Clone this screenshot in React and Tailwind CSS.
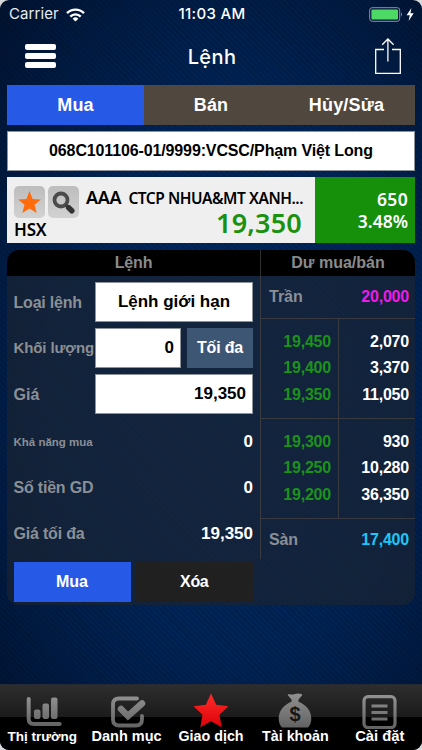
import React, { useState } from 'react';

const tabs = ['Mua', 'Bán', 'Hủy/Sửa'];

const sellOrders = [
  ['19,450', '2,070'],
  ['19,400', '3,370'],
  ['19,350', '11,050'],
];

const buyOrders = [
  ['19,300', '930'],
  ['19,250', '10,280'],
  ['19,200', '36,350'],
];

const STRIPES =
  'bg-[repeating-linear-gradient(45deg,rgba(0,0,0,0.12)_0px,rgba(0,0,0,0.12)_2px,transparent_2px,transparent_4px)]';

const StatusBar = () => (
  <div className="h-[29px] flex items-center px-[9px] font-['Inter',sans-serif] text-[15px] text-white">
    <div className="flex-1 flex items-center gap-[7px]">
      <span className="font-normal tracking-[0.1px] text-[#e8ebf0]">Carrier</span>
      <svg width="19" height="14" viewBox="0 0 19 14" fill="none" stroke="#fff" strokeWidth="2.4">
        <path d="M1 5.2a12 12 0 0 1 17 0" />
        <path d="M4.3 8.6a7.3 7.3 0 0 1 10.4 0" />
        <path d="M9.5 13.6 6.6 10.7a4.1 4.1 0 0 1 5.8 0z" fill="#fff" stroke="none" />
      </svg>
    </div>
    <span className="font-medium tracking-[0.35px] pl-[2px]">11:03 AM</span>
    <div className="flex-1 flex items-center justify-end">
      <svg width="47" height="15" viewBox="0 0 47 15" className="-mr-[3px]">
        <rect x="0.7" y="0.7" width="30" height="13.6" rx="2.5" fill="none" stroke="#8a93a3" />
        <rect x="2.4" y="2.4" width="26.6" height="10.2" rx="1" fill="#4cd964" />
        <path d="M32 5.3q2 2.2 0 4.4z" fill="#8a93a3" />
        <path d="M42.4 1 37.6 8.3h3.2L39.6 14l5.1-7.7h-3.2z" fill="#fff" />
      </svg>
    </div>
  </div>
);

const Header = () => (
  <div className="h-[56px] flex items-center justify-between pl-[25px] pr-[20px]">
    <div className="w-[31px] flex flex-col gap-[3px] mt-[-3px]">
      <div className="h-[6px] bg-white rounded-[2px]"></div>
      <div className="h-[6px] bg-white rounded-[2px]"></div>
      <div className="h-[6px] bg-white rounded-[2px]"></div>
    </div>
    <h1 className="font-['Inter',sans-serif] font-medium text-[20px] text-white tracking-[0.4px] pr-[6px]">Lệnh</h1>
    <svg width="28" height="38" viewBox="0 0 28 38" fill="none" stroke="#fff" strokeWidth="1.3" className="-mt-[4px]">
      <path d="M10 13.5H1.7v24h24.6v-24H18" />
      <path d="M13.9 25.5V3M8.2 8.8 13.9 3l5.7 5.8" />
    </svg>
  </div>
);

const Quote = () => (
  <div className="h-[66px] mt-[6px] flex font-['Noto_Sans',sans-serif] font-semibold">
    <div className="w-[308px] bg-[#efefef] pl-[7px] pt-[9px] pr-[13px]">
      <div className="flex">
        <div className="w-[31px] h-[32px] rounded-[5px] bg-linear-to-b from-[#bdbdbd] to-[#d2d2d2] flex items-center justify-center">
          <svg width="25" height="25" viewBox="0 0 24 24">
            <path d="m12 1 3 7.6 8 .5-6.2 5.1 2.1 7.9L12 17.700l-6.900 4.400 2.100-7.900L1 9.100l8-.500z" fill="#ff6c0e" />
          </svg>
        </div>
        <div className="ml-[3px] w-[31px] h-[32px] rounded-[5px] bg-linear-to-b from-[#bdbdbd] to-[#d2d2d2] flex items-center justify-center">
          <svg width="25" height="25" viewBox="0 0 25 25" fill="none">
            <circle cx="10" cy="10" r="6.5" stroke="#4b4b4b" strokeWidth="3.8" />
            <path d="m15 15 2.5 2.5" stroke="#3c3c3c" strokeWidth="3" />
            <path d="m17.6 17.6 3.2 3.2" stroke="#333" strokeWidth="5.5" strokeLinecap="round" />
          </svg>
        </div>
        <div className="ml-[7px] flex-1 h-[22px] flex items-baseline justify-between text-black whitespace-nowrap leading-[22px]">
          <span className="text-[18px] tracking-[-0.4px]">AAA</span>
          <span className="text-[15.5px] tracking-[-0.45px] -mr-[1px]">CTCP NHUA&amp;MT XANH...</span>
        </div>
      </div>
      <div className="flex justify-between items-start">
        <span className="text-[17px] leading-[20px] mt-[2px] tracking-[-0.2px] text-black">HSX</span>
        <span className="text-[27px] leading-[28px] -mt-[9px] tracking-[0.2px] text-[#1a920f]">19,350</span>
      </div>
    </div>
    <div className="flex-1 bg-[#168f0b] text-white text-[17.5px] text-right leading-[22px] pt-[11px] pr-[7px]">
      <div className="tracking-[0.3px]">650</div>
      <div>3.48%</div>
    </div>
  </div>
);

const Field = ({ children, className }) => (
  <div className={`h-[40px] bg-white border border-[#8e939b] text-black flex items-center ${className}`}>{children}</div>
);

const OrderForm = () => (
  <div className="w-[253px] pl-[6.5px] pr-[7px] pt-[6px] text-[#8b8f96] text-[16px]">
    <div className="flex items-center h-[40px]">
      <span className="w-[81.5px] whitespace-nowrap tracking-[-0.2px] pt-[1px]">Loại lệnh</span>
      <Field className="w-[158px] justify-center text-[17px]">Lệnh giới hạn</Field>
    </div>
    <div className="flex items-center h-[40px] mt-[6px]">
      <span className="w-[81.5px] whitespace-nowrap text-[15px] tracking-[-0.1px] pt-[1px]">Khối lượng</span>
      <Field className="w-[86px] justify-end pr-[6px] text-[17px]">0</Field>
      <button className="ml-[6px] w-[66px] h-[40px] bg-[#3d5673] text-white tracking-[-0.2px]">Tối đa</button>
    </div>
    <div className="flex items-center h-[40px] mt-[6px]">
      <span className="w-[81.5px] pt-[1px]">Giá</span>
      <Field className="w-[158px] justify-end pr-[6px] text-[17px]">19,350</Field>
    </div>
    <div className="flex items-center justify-between h-[46px] mt-[5px]">
      <span className="text-[11.5px] pt-[1px]">Khả năng mua</span>
      <span className="text-white text-[17px]">0</span>
    </div>
    <div className="flex items-center justify-between h-[46px]">
      <span className="tracking-[-0.2px]">Số tiền GD</span>
      <span className="text-white text-[17px]">0</span>
    </div>
    <div className="flex items-center justify-between h-[46px]">
      <span className="tracking-[-0.2px]">Giá tối đa</span>
      <span className="text-white text-[17px]">19,350</span>
    </div>
    <div className="flex gap-[5px] mt-[5px] text-white">
      <button className="w-[117px] h-[40px] bg-[#2559e6]">Mua</button>
      <button className="flex-1 h-[40px] bg-[#202020] tracking-[-0.3px]">Xóa</button>
    </div>
  </div>
);

const Orders = ({ rows }) => (
  <div className="h-[100px] flex border-b border-[#3a3b41] text-[16px] tracking-[-0.2px] leading-[26.4px] text-right">
    <div className="w-[78px] pt-[10px] pr-[7px] border-r border-[#3a3b41] text-[#1c921c]">
      {rows.map(([price]) => (
        <div key={price}>{price}</div>
      ))}
    </div>
    <div className="flex-1 pt-[10px] pr-[6px] text-white">
      {rows.map(([price, volume]) => (
        <div key={price}>{volume}</div>
      ))}
    </div>
  </div>
);

const OrderBook = () => (
  <div className="flex-1 h-[283px] border-l border-[#3a3b41]">
    <div className="h-[43px] flex items-center justify-between pl-[8px] pr-[6px] border-b border-[#3a3b41] text-[16px]">
      <span className="text-[#8b8f96]">Trần</span>
      <span className="text-[#f019e8] tracking-[-0.2px]">20,000</span>
    </div>
    <Orders rows={sellOrders} />
    <Orders rows={buyOrders} />
    <div className="h-[41px] flex items-center justify-between pl-[8px] pr-[6px] text-[16px]">
      <span className="text-[#8b8f96] tracking-[-0.2px]">Sàn</span>
      <span className="text-[#1cc6f7] tracking-[-0.2px]">17,400</span>
    </div>
  </div>
);

const GreyGradient = ({ id, height }) => (
  <defs>
    <linearGradient id={id} gradientUnits="userSpaceOnUse" x1="0" y1="0" x2="0" y2={height}>
      <stop offset="0" stopColor="#929292" />
      <stop offset="1" stopColor="#626262" />
    </linearGradient>
  </defs>
);

const icons = {
  market: (
    <svg width="37" height="31" viewBox="0 0 37 31">
      <GreyGradient id="bars" height="31" />
      <path d="M2.7 3v20q0 5 5 5h26" fill="none" stroke="url(#bars)" strokeWidth="4" strokeLinecap="round" />
      <g fill="url(#bars)">
        <rect x="8" y="13.5" width="6.5" height="9.5" rx="2" />
        <rect x="16.5" y="7.5" width="6.5" height="15.5" rx="2" />
        <rect x="25" y="1.5" width="6.5" height="21.5" rx="2" />
      </g>
    </svg>
  ),
  list: (
    <svg width="36" height="33" viewBox="0 0 36 33">
      <GreyGradient id="check" height="33" />
      <g fill="none" stroke="url(#check)" strokeLinecap="round">
        <path d="M27 3.5H9Q3 3.5 3 9v15.5q0 6 6 6h17q6 0 6-6V21" strokeWidth="3.8" />
        <path d="m11 14 7 7L32 8.500" strokeWidth="6.5" />
      </g>
    </svg>
  ),
  trade: (
    <svg width="36" height="35" viewBox="0 0 36 35">
      <defs>
        <linearGradient id="star" x1="0" y1="0" x2="0" y2="1">
          <stop offset="0" stopColor="#ff2c28" />
          <stop offset="1" stopColor="#dc0209" />
        </linearGradient>
      </defs>
      <path d="m18 .5 5.200 11.300 12.300 1.400-9 8.600 2.200 12.400L18 28.200 7.300 34.200l2.200-12.400-9-8.600 12.300-1.400z" fill="url(#star)" />
    </svg>
  ),
  account: (
    <svg width="34" height="35" viewBox="0 0 34 35">
      <GreyGradient id="bag" height="35" />
      <path
        d="M10.5 1q3.200 1 6.500 0t6.500 0q1.200.5.5 1.500L20.500 6.500v2.200C28.500 12 33.300 18 33.300 25.500q0 5.500-3.300 9H4q-3.300-3.500-3.300-9C.7 18 5.500 12 13.500 8.700V6.500L10 2.500Q9.300 1.500 10.500 1z"
        fill="url(#bag)"
      />
      <text x="17" y="28" textAnchor="middle" fontSize="20" fill="#161616">$</text>
    </svg>
  ),
  settings: (
    <svg width="35" height="34" viewBox="0 0 35 34">
      <GreyGradient id="sheet" height="34" />
      <rect x="2" y="1.7" width="31" height="31" rx="4" fill="none" stroke="url(#sheet)" strokeWidth="3.2" />
      <path d="M9.5 9.5h16v3h-16zM9.5 16h16v3h-16zM9.5 22.5h16v3h-16z" fill="url(#sheet)" />
    </svg>
  ),
};

const navItems = [
  { icon: 'market', label: 'Thị trường', text: 'text-[13.5px]', space: 'pb-[1px] pl-[4px]' },
  { icon: 'list', label: 'Danh mục', text: 'text-[14.5px]', space: 'pl-[2px]' },
  { icon: 'trade', label: 'Giao dịch', text: 'text-[14.3px]', space: '' },
  { icon: 'account', label: 'Tài khoản', text: 'text-[14.3px]', space: '' },
  { icon: 'settings', label: 'Cài đặt', text: 'text-[14.8px]', space: '-mb-[1px]' },
];

const BottomNav = () => (
  <div className="h-[66px] grid grid-cols-5 border-t border-[#252a33] bg-[linear-gradient(to_bottom,#2d2d2d_0px,#1b1b1b_32px,#000_32px)]">
    {navItems.map((item) => (
      <div key={item.icon} className="flex flex-col items-center">
        <div className="h-[43px] flex items-end">
          <div className={`flex ${item.space}`}>{icons[item.icon]}</div>
        </div>
        <span className={`relative leading-[17px] whitespace-nowrap text-white ${item.text}`}>{item.label}</span>
      </div>
    ))}
  </div>
);

const App = () => {
  const [activeTab, setActiveTab] = useState('Mua');

  return (
    <div className="w-[422px] h-[750px] overflow-hidden bg-[#d8d8da]">
      <div className="h-full rounded-[9px] overflow-hidden font-['Liberation_Sans',sans-serif] font-bold bg-[radial-gradient(ellipse_340px_560px_at_55%_50%,#002a62_0%,#002456_50%,#00112c_100%)]">
        <div className={`h-full flex flex-col ${STRIPES}`}>
          <StatusBar />
          <Header />

          <div className="px-[7px] flex-1">
            <div className="grid grid-cols-[137px_134px_1fr] h-[40px] bg-[#50483f]">
              {tabs.map((tab) => (
                <button
                  key={tab}
                  onClick={() => setActiveTab(tab)}
                  className={`text-white text-[18px] tracking-[0.2px] ${activeTab === tab ? 'bg-[#2559e6]' : ''}`}
                >
                  {tab}
                </button>
              ))}
            </div>

            <Field className="mt-[6px] justify-center text-[16px] tracking-[-0.13px]">
              068C101106-01/9999:VCSC/Phạm Việt Long
            </Field>

            <Quote />

            <div className="mt-[7px] h-[355px] rounded-[12px] overflow-hidden bg-[#1a2432]/70">
              <div className="h-[26px] flex items-center bg-black text-[#8b8b8b] text-[16px] text-center">
                <div className="w-[253px] tracking-[-0.2px]">Lệnh</div>
                <div className="flex-1 h-full leading-[26px] border-l border-[#303030]">Dư mua/bán</div>
              </div>
              <div className="flex">
                <OrderForm />
                <OrderBook />
              </div>
            </div>
          </div>

          <BottomNav />
        </div>
      </div>
    </div>
  );
};

export default App;
